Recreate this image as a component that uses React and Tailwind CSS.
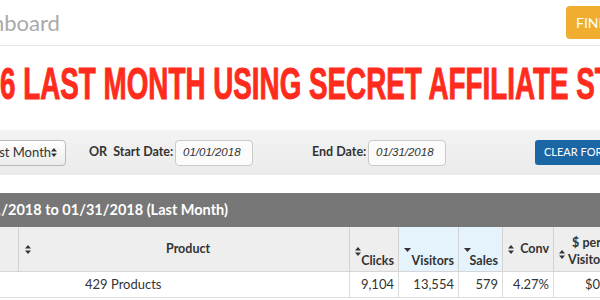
import React from "react";

function SortIcon({ className = "" }) {
  return (
    <svg width="6" height="9" viewBox="0 0 6 9" className={className}>
      <path d="M3 0 L6 3.6 L0 3.6 Z" fill="#333" />
      <path d="M3 9 L6 5.4 L0 5.4 Z" fill="#333" />
    </svg>
  );
}

function DownIcon({ className = "" }) {
  return (
    <svg width="7" height="4" viewBox="0 0 7 4" className={className}>
      <path d="M0 0 L7 0 L3.5 4 Z" fill="#333" />
    </svg>
  );
}

export default function App() {
  return (
    <div className="w-[600px] h-[300px] overflow-hidden bg-white font-['Lato','Liberation_Sans',sans-serif] text-[#333]">
      {/* top bar */}
      <div className="flex items-center h-[46px] border-b border-[#e6e6e6]">
        <div className="w-[566px] shrink-0 flex">
          <div className="-ml-[45px] text-[22px] text-[#a9a9a9] whitespace-nowrap leading-none">Dashboard</div>
        </div>
        <button className="shrink-0 h-[33px] px-[10px] rounded-[4px] bg-[#f0ad30] text-white text-[14px] whitespace-nowrap">
          FIND PRODUCTS
        </button>
      </div>

      {/* headline */}
      <div className="h-[84px] whitespace-nowrap">
        <div className="inline-block mt-[16px] origin-left scale-x-[0.632] font-['Liberation_Sans',sans-serif] font-bold text-[44px] leading-none text-[#ff2b1c] [-webkit-text-stroke:1px_#ff2b1c]">
          6 LAST MONTH USING SECRET AFFILIATE STRATEGY
        </div>
      </div>

      {/* filter bar */}
      <div className="h-[45px] bg-gradient-to-b from-[#f3f3f3] to-[#ebebeb] flex items-center whitespace-nowrap">
        <div className="-ml-[24px] w-[90px] shrink-0 h-[26px] rounded-[4px] border border-[#b9b9b9] bg-gradient-to-b from-white to-[#ececec] flex items-center justify-between pl-[9px] pr-[8px] text-[13px]">
          <span>Last Month</span>
          <SortIcon />
        </div>
        <div className="ml-[23px] w-[86px] shrink-0 text-[12.5px] font-bold">OR&nbsp; Start Date:</div>
        <div className="w-[78px] shrink-0 h-[26px] rounded-[4px] border border-[#c9c9c9] bg-[#fbfbfb] flex items-center pl-[7px] text-[11.5px] italic font-['Liberation_Sans',sans-serif]">
          01/01/2018
        </div>
        <div className="ml-[59px] w-[56px] shrink-0 text-[12.5px] font-bold">End Date:</div>
        <div className="w-[78px] shrink-0 h-[26px] rounded-[4px] border border-[#c9c9c9] bg-[#fbfbfb] flex items-center pl-[7px] text-[11.5px] italic font-['Liberation_Sans',sans-serif]">
          01/31/2018
        </div>
        <button className="ml-[89px] shrink-0 h-[25px] px-[9px] rounded-[3px] bg-[#1b67a6] text-white text-[11px]">
          CLEAR FORM
        </button>
      </div>

      {/* results title */}
      <div className="mt-[18px] h-[34px] bg-[#777777] flex items-center">
        <div className="w-[228px] shrink-0 flex justify-end whitespace-nowrap text-white font-bold text-[14.5px]">
          01/01/2018 to 01/31/2018 (Last Month)
        </div>
      </div>

      {/* table header */}
      <div className="grid grid-cols-[19px_331px_49px_60px_44px_51px_90px] h-[45px] bg-[#eeeeee] border-b border-[#d6d6d6] text-[12.5px] font-bold whitespace-nowrap">
        <div className="border-r border-[#d2d2d2]"></div>
        <div className="border-r border-[#d2d2d2] flex items-center relative">
          <SortIcon className="ml-[6px]" />
          <span className="absolute left-[147px]">Product</span>
        </div>
        <div className="border-r border-[#d2d2d2] flex flex-col justify-end pb-[3px] pl-[5px] pr-[4px]">
          <SortIcon className="-mb-[3px]" />
          <span className="text-right leading-[15px]">Clicks</span>
        </div>
        <div className="border-r border-[#d2d2d2] bg-[#e5f3fd] flex flex-col justify-end pb-[3px] pl-[5px] pr-[4px]">
          <DownIcon className="mb-[1px]" />
          <span className="text-right leading-[15px]">Visitors</span>
        </div>
        <div className="border-r border-[#d2d2d2] bg-[#e5f3fd] flex flex-col justify-end pb-[3px] pl-[5px] pr-[4px]">
          <DownIcon className="mb-[1px]" />
          <span className="text-right leading-[15px]">Sales</span>
        </div>
        <div className="border-r border-[#d2d2d2] flex items-center justify-between pl-[5px] pr-[4px]">
          <SortIcon />
          <span>Conv</span>
        </div>
        <div className="flex items-center pl-[5px] pt-[3px]">
          <SortIcon className="mt-[8px]" />
          <span className="ml-[3px] text-center leading-[17px]">
            $ per
            <br />
            Visitor
          </span>
        </div>
      </div>

      {/* total row */}
      <div className="grid grid-cols-[350px_49px_60px_44px_51px_90px] h-[26px] border-b border-[#dcdcdc] text-[13px] whitespace-nowrap">
        <div className="border-r border-[#dcdcdc] flex items-center pl-[85px]">429 Products</div>
        <div className="border-r border-[#dcdcdc] flex items-center justify-end pr-[4px]">9,104</div>
        <div className="border-r border-[#dcdcdc] flex items-center justify-end pr-[4px]">13,554</div>
        <div className="border-r border-[#dcdcdc] flex items-center justify-end pr-[4px]">579</div>
        <div className="border-r border-[#dcdcdc] flex items-center justify-end pr-[4px]">4.27%</div>
        <div className="flex items-center pl-[31px]">$0.85</div>
      </div>
    </div>
  );
}
